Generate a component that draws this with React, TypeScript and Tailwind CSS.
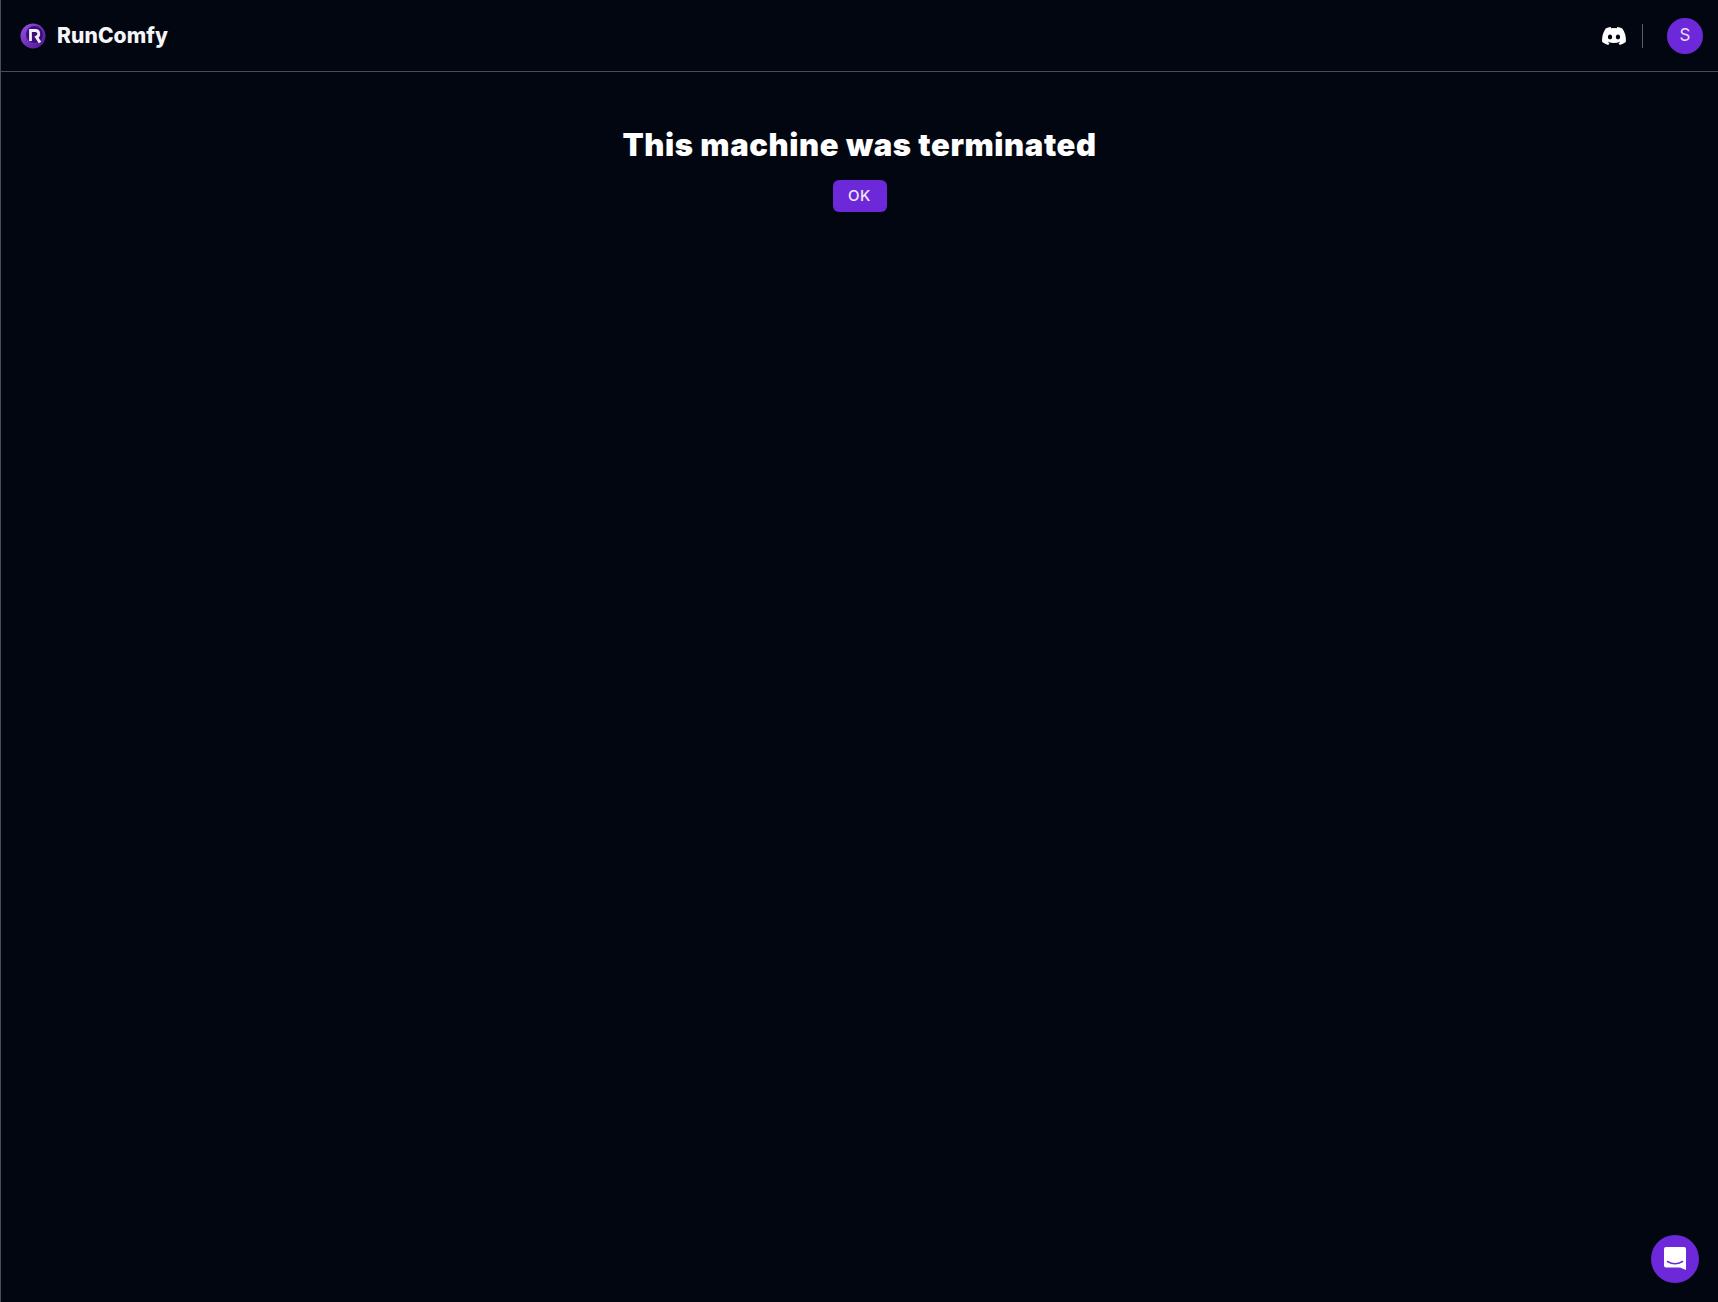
import React from 'react';
import { FaDiscord } from 'react-icons/fa';

function Logo() {
  return (
    <svg width="26" height="26" viewBox="0 0 26 26">
      <defs>
        <linearGradient id="logoRing" x1="0" y1="0" x2="1" y2="1">
          <stop offset="0" stopColor="#9a4fe8" />
          <stop offset="1" stopColor="#4a1590" />
        </linearGradient>
      </defs>
      <circle cx="13" cy="13" r="12.5" fill="url(#logoRing)" />
      <circle cx="14.5" cy="11.5" r="8.5" fill="#3c0f78" />
      <path d="M10.500 18V7.500h5a3.400 3.400 0 0 1 1 6.600L20 19.500" fill="none" stroke="#f3edfb" strokeWidth="2.800" />
    </svg>
  );
}

function ChatIcon() {
  return (
    <svg width="24" height="26" viewBox="0 0 24 26">
      <path d="M3 1h18a2 2 0 0 1 2 2v21l-6-2.400H3a2 2 0 0 1-2-2V3a2 2 0 0 1 2-2z" fill="#ffffff" />
      <path d="M4.500 15.500c4.500 2.800 10.500 2.800 15 0" fill="none" stroke="#6d28d9" strokeWidth="1.500" strokeLinecap="round" />
    </svg>
  );
}

export default function App() {
  return (
    <div className="relative flex h-screen flex-col overflow-hidden border-l border-[#4b4d55] bg-[#020611] font-['Inter',sans-serif] text-white">
      <header className="flex h-[72px] shrink-0 items-center justify-between border-b border-[#4b4d55] pl-[19px] pr-[15px]">
        <div className="flex items-center gap-[11px]">
          <Logo />
          <span className="text-[21px] font-extrabold leading-none tracking-[0.1px] text-[#f5f5f7]">RunComfy</span>
        </div>
        <div className="flex items-center">
          <FaDiscord className="mr-[-1px] h-[26px] w-[26px] text-white" />
          <div className="mx-[16px] h-[24px] w-px bg-[#5b5d66]" />
          <div className="ml-[8px] flex h-9 w-9 items-center justify-center rounded-full bg-[#6d28d9] text-[17px] text-[#e9defa]">S</div>
        </div>
      </header>
      <main className="flex flex-col items-center pt-[54px]">
        <h1 className="text-[31px] font-black leading-[38px] tracking-[0.6px] text-white">This machine was terminated</h1>
        <button className="mt-4 flex h-8 w-[54px] items-center justify-center rounded-md bg-[#6d28d9] text-[15px] font-medium tracking-[0.5px] text-[#f1eafb]">OK</button>
      </main>
      <div className="absolute bottom-[19px] right-[19px] flex h-12 w-12 items-center justify-center rounded-full bg-[#6d28d9]">
        <ChatIcon />
      </div>
    </div>
  );
}
